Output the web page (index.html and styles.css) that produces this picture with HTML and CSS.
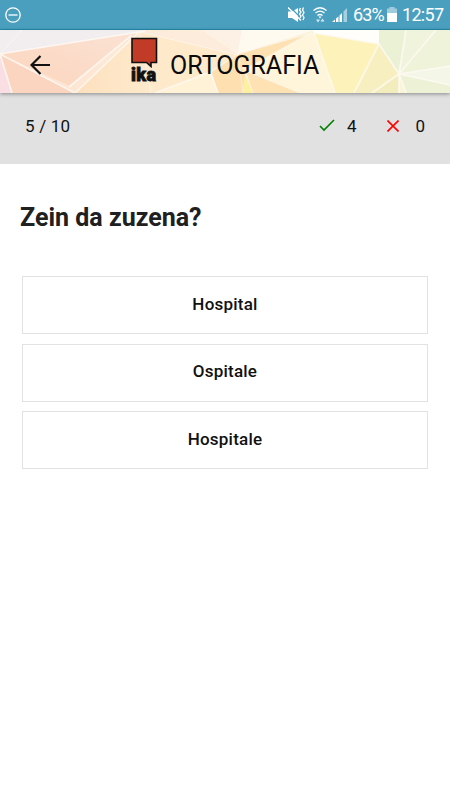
FILE: index.html
```html
<!DOCTYPE html>
<html lang="eu">
<head>
<meta charset="utf-8">
<title>Ortografia</title>
<link rel="stylesheet" href="styles.css">
</head>
<body>
<div class="status">
  <svg class="dnd" width="16" height="16" viewBox="0 0 16 16"><circle cx="8" cy="8" r="7.2"/><path d="M3.5 8h9"/></svg>
  <div class="indicators">
    <svg width="60" height="20" viewBox="0 0 60 20">
      <path fill="#fff" d="M0 6.500h4L10 3v14l-6-4H0z"/>
      <path stroke="#4a9fbf" stroke-width="1.2" d="M2 2l12 12"/>
      <path stroke="#fff" stroke-width="1.5" d="M0 2.500l13 13"/>
      <path class="wave" d="M12.500 3l-1 2 1.500 2-1.500 2 1.500 2-1 2M15.500 2.500l-1 2.500 1.500 2.500-1.500 2.500 1.500 2.500-1 2.500"/>
      <path class="wave" d="M25.500 5.500q6.500-5.500 13 0M27.500 8q4.500-3.800 9 0M29.500 10.500q2.500-2 5 0"/>
      <path fill="#fff" d="M30.500 11.500h3L32 13.500z"/>
      <path fill="#d5eaf1" d="M28 14.500h4l-2 3zM32.500 16.500h4l-2-3z"/>
      <path fill="#fff" d="M44 17l3-2.500V17zM48 13.500l2.500-2V17H48zM51.500 10.500l2.500-2.500v9h-2.500z"/>
      <path fill="#a7d0df" d="M55.500 6.500L59 3v14h-3.500z"/>
    </svg>
    <span class="battery-text">63%</span>
    <svg class="battery" width="10" height="15" viewBox="0 0 10 15"><path fill="#a0cbdc" d="M2.500 0h5v1.500H10V6H0V1.500h2.500z"/><path fill="#fff" d="M0 6h10v9H0z"/></svg>
    <span class="clock">12:57</span>
  </div>
</div>
<header class="header">
  <svg class="pattern" width="450" height="63" viewBox="0 0 450 63" preserveAspectRatio="none">
    <defs>
      <linearGradient id="base" x1="0" x2="1"><stop offset="0" stop-color="#fde0d0"/><stop offset=".4" stop-color="#fdeed8"/><stop offset="1" stop-color="#f8f6dc"/></linearGradient>
      <linearGradient id="peach" x1="0" y1="1" x2="1" y2="0"><stop offset="0" stop-color="#fbd5bc"/><stop offset="1" stop-color="#fbe2d4"/></linearGradient>
      <linearGradient id="amber" x1="0" y1="0" x2="1" y2="0"><stop offset="0" stop-color="#fde0be"/><stop offset="1" stop-color="#fdebcd"/></linearGradient>
    </defs>
    <path fill="url(#base)" d="M0 0h450v63H0z"/>
    <path fill="#f2eef0" d="M0 0h145v1L0 24z"/>
    <path fill="url(#peach)" d="M0 24L137 3 70 56z"/>
    <path fill="#f9dfe4" d="M0 24l12 39H0z"/>
    <path fill="#fbd5c0" d="M0 24l75 39H12z"/>
    <path fill="url(#amber)" d="M75 63L137 3l18 60z"/>
    <path fill="#fdebdc" d="M140 2h63l24 15 10 8z"/>
    <path fill="#fdf0e4" d="M203 0h39l-4 24-11-9z"/>
    <path fill="#fee9cb" d="M140 2l97 23-30 18-52 20z"/>
    <path fill="#fff2d6" d="M210 42l8 21h-61z"/>
    <path fill="#fddfb0" d="M212 42l25-17 8 20-2 18h-25z"/>
    <path fill="#fffaf0" d="M242 0h73L238 24z"/>
    <path fill="#fde1b2" d="M238 24l67-19-55 31-9-1z"/>
    <path fill="#fff5da" d="M250 36l65-34 19 61h-37l-47-20z"/>
    <path fill="#fee2b3" d="M246 41l54 22h-47z"/>
    <path fill="#fff09f" d="M245 44l8 19h-10z"/>
    <path fill="#fffefa" d="M312 0h67v14l-65-11z"/>
    <path fill="#fdf2b9" d="M314 3l65 11-25 49h-19z"/>
    <path fill="#f7efc0" d="M379 14l20 30-27 19h-18z"/>
    <path fill="#eaf1d4" d="M379 0h27l-7 44-20-30z"/>
    <path fill="#f1f4dc" d="M406 0h30l-37 44z"/>
    <path fill="#eef3d9" d="M436 0h14v36l-51 8z"/>
    <path fill="#f4f7e7" d="M399 44l51-8v19z"/>
    <path fill="#edf2d6" d="M399 44l51 11v8h-45z"/>
    <path fill="#f3edbd" d="M399 44v19h-27z"/>
    <g class="seams">
      <path d="M0 24L145 1M0 24l75 39M0 24l12 39M75 63L139 2M69 57L132 5"/>
      <path d="M210 42l-55 21M210 42l8 21M314 3l21 60M314 3l65 11L354 63M379 14l20 30-27 19M406 0l-7 44M436 0l-37 44M450 36l-51 8 51 11M399 44v19M399 44l7 19"/>
      <path class="faint" d="M0 24L22 0M140 2l11 61M140 2l97 23-27 17M203 0l35 24 4-24M238 24L312 3l-64 36M238 24l5 39M246 41l54 22M245 43l8 20"/>
    </g>
  </svg>
  <svg class="back" width="22" height="20" viewBox="0 0 22 20"><path d="M20 10H2M10.500 1L1.500 10l9 9"/></svg>
  <div class="brand">
    <svg width="27" height="31" viewBox="0 0 27 31"><path d="M1 1.500h24.500V25.500H20V29.500L15.500 25.500H1z"/></svg>
    <span>ika</span>
  </div>
  <h1>ORTOGRAFIA</h1>
</header>
<section class="score">
  <span class="progress">5 / 10</span>
  <svg class="right" width="16" height="13" viewBox="0 0 16 13"><path d="M1 7l4 4L15 1"/></svg>
  <span>4</span>
  <svg class="wrong" width="12" height="12" viewBox="0 0 12 12"><path d="M.5.5l11 11M11.500.5l-11 11"/></svg>
  <span>0</span>
</section>
<main>
  <h2>Zein da zuzena?</h2>
  <div class="answers">
    <button>Hospital</button>
    <button>Ospitale</button>
    <button>Hospitale</button>
  </div>
</main>
</body>
</html>
```
FILE: styles.css
```css
* { box-sizing: border-box; }
body { margin: 0; height: 800px; background: #fff; color: #111; font-family: Roboto, sans-serif; overflow: hidden; }
svg { display: block; flex: none; fill: none; }
.status { height: 30px; background: #4a9fbf; border-bottom: 1px solid #248eb1; display: flex; justify-content: space-between; padding: 0 7px 0 5px; color: #fff; }
.dnd { margin-top: 7px; stroke: #fff; stroke-width: 1.3; }
.indicators { display: flex; align-items: center; font-size: 18px; line-height: 30px; }
.wave { stroke: #fff; stroke-width: 1.3; }
.battery-text { margin-left: 5px; width: 30px; letter-spacing: -.9px; }
.battery { margin: 0 5px 0 4px; }
.clock { width: 41px; letter-spacing: -.7px; }
.header { position: relative; height: 63px; display: flex; box-shadow: 0 1px 4px rgba(0,0,0,.4); z-index: 1; }
.pattern { position: absolute; inset: 0; z-index: -1; }
.seams { stroke: #fffaf4; stroke-width: 1.7; stroke-opacity: .8; }
.faint { stroke-width: 1; stroke-opacity: .6; }
.back { margin: 25px 0 0 30px; stroke: #111; stroke-width: 2.2; }
.brand { margin: 7px 0 0 79px; width: 27px; }
.brand path { fill: #c13b27; stroke: #111; stroke-width: 1.6; }
.brand span { display: block; font: 900 18px/18px Roboto, sans-serif; margin-top: -2px; letter-spacing: .3px; -webkit-text-stroke: .8px #111; }
h1 { margin: 21px 0 0 12px; font-size: 25px; line-height: 30px; font-weight: 400; letter-spacing: 0; color: #0b0b0b; }
.score { height: 71px; background: #e1e1e1; display: flex; align-items: center; padding: 0 25px 6px; font-size: 17px; line-height: 20px; }
.progress { margin-right: auto; letter-spacing: .2px; }
.right { stroke: green; stroke-width: 1.6; margin-right: 12px; }
.wrong { stroke: red; stroke-width: 1.6; margin: 0 16px 0 31px; }
main { padding: 39px 22px 0; }
h2 { margin: 0 0 43px -2px; font-size: 25px; line-height: 30px; font-weight: 700; color: #202020; }
.answers { display: flex; flex-direction: column; gap: 9.500px; }
button { height: 58px; border: 1.500px solid #e2e2e2; background: #fff; font: 500 17px/20px Roboto, sans-serif; letter-spacing: .22px; color: #111; padding: 0 0 3px; }
```
